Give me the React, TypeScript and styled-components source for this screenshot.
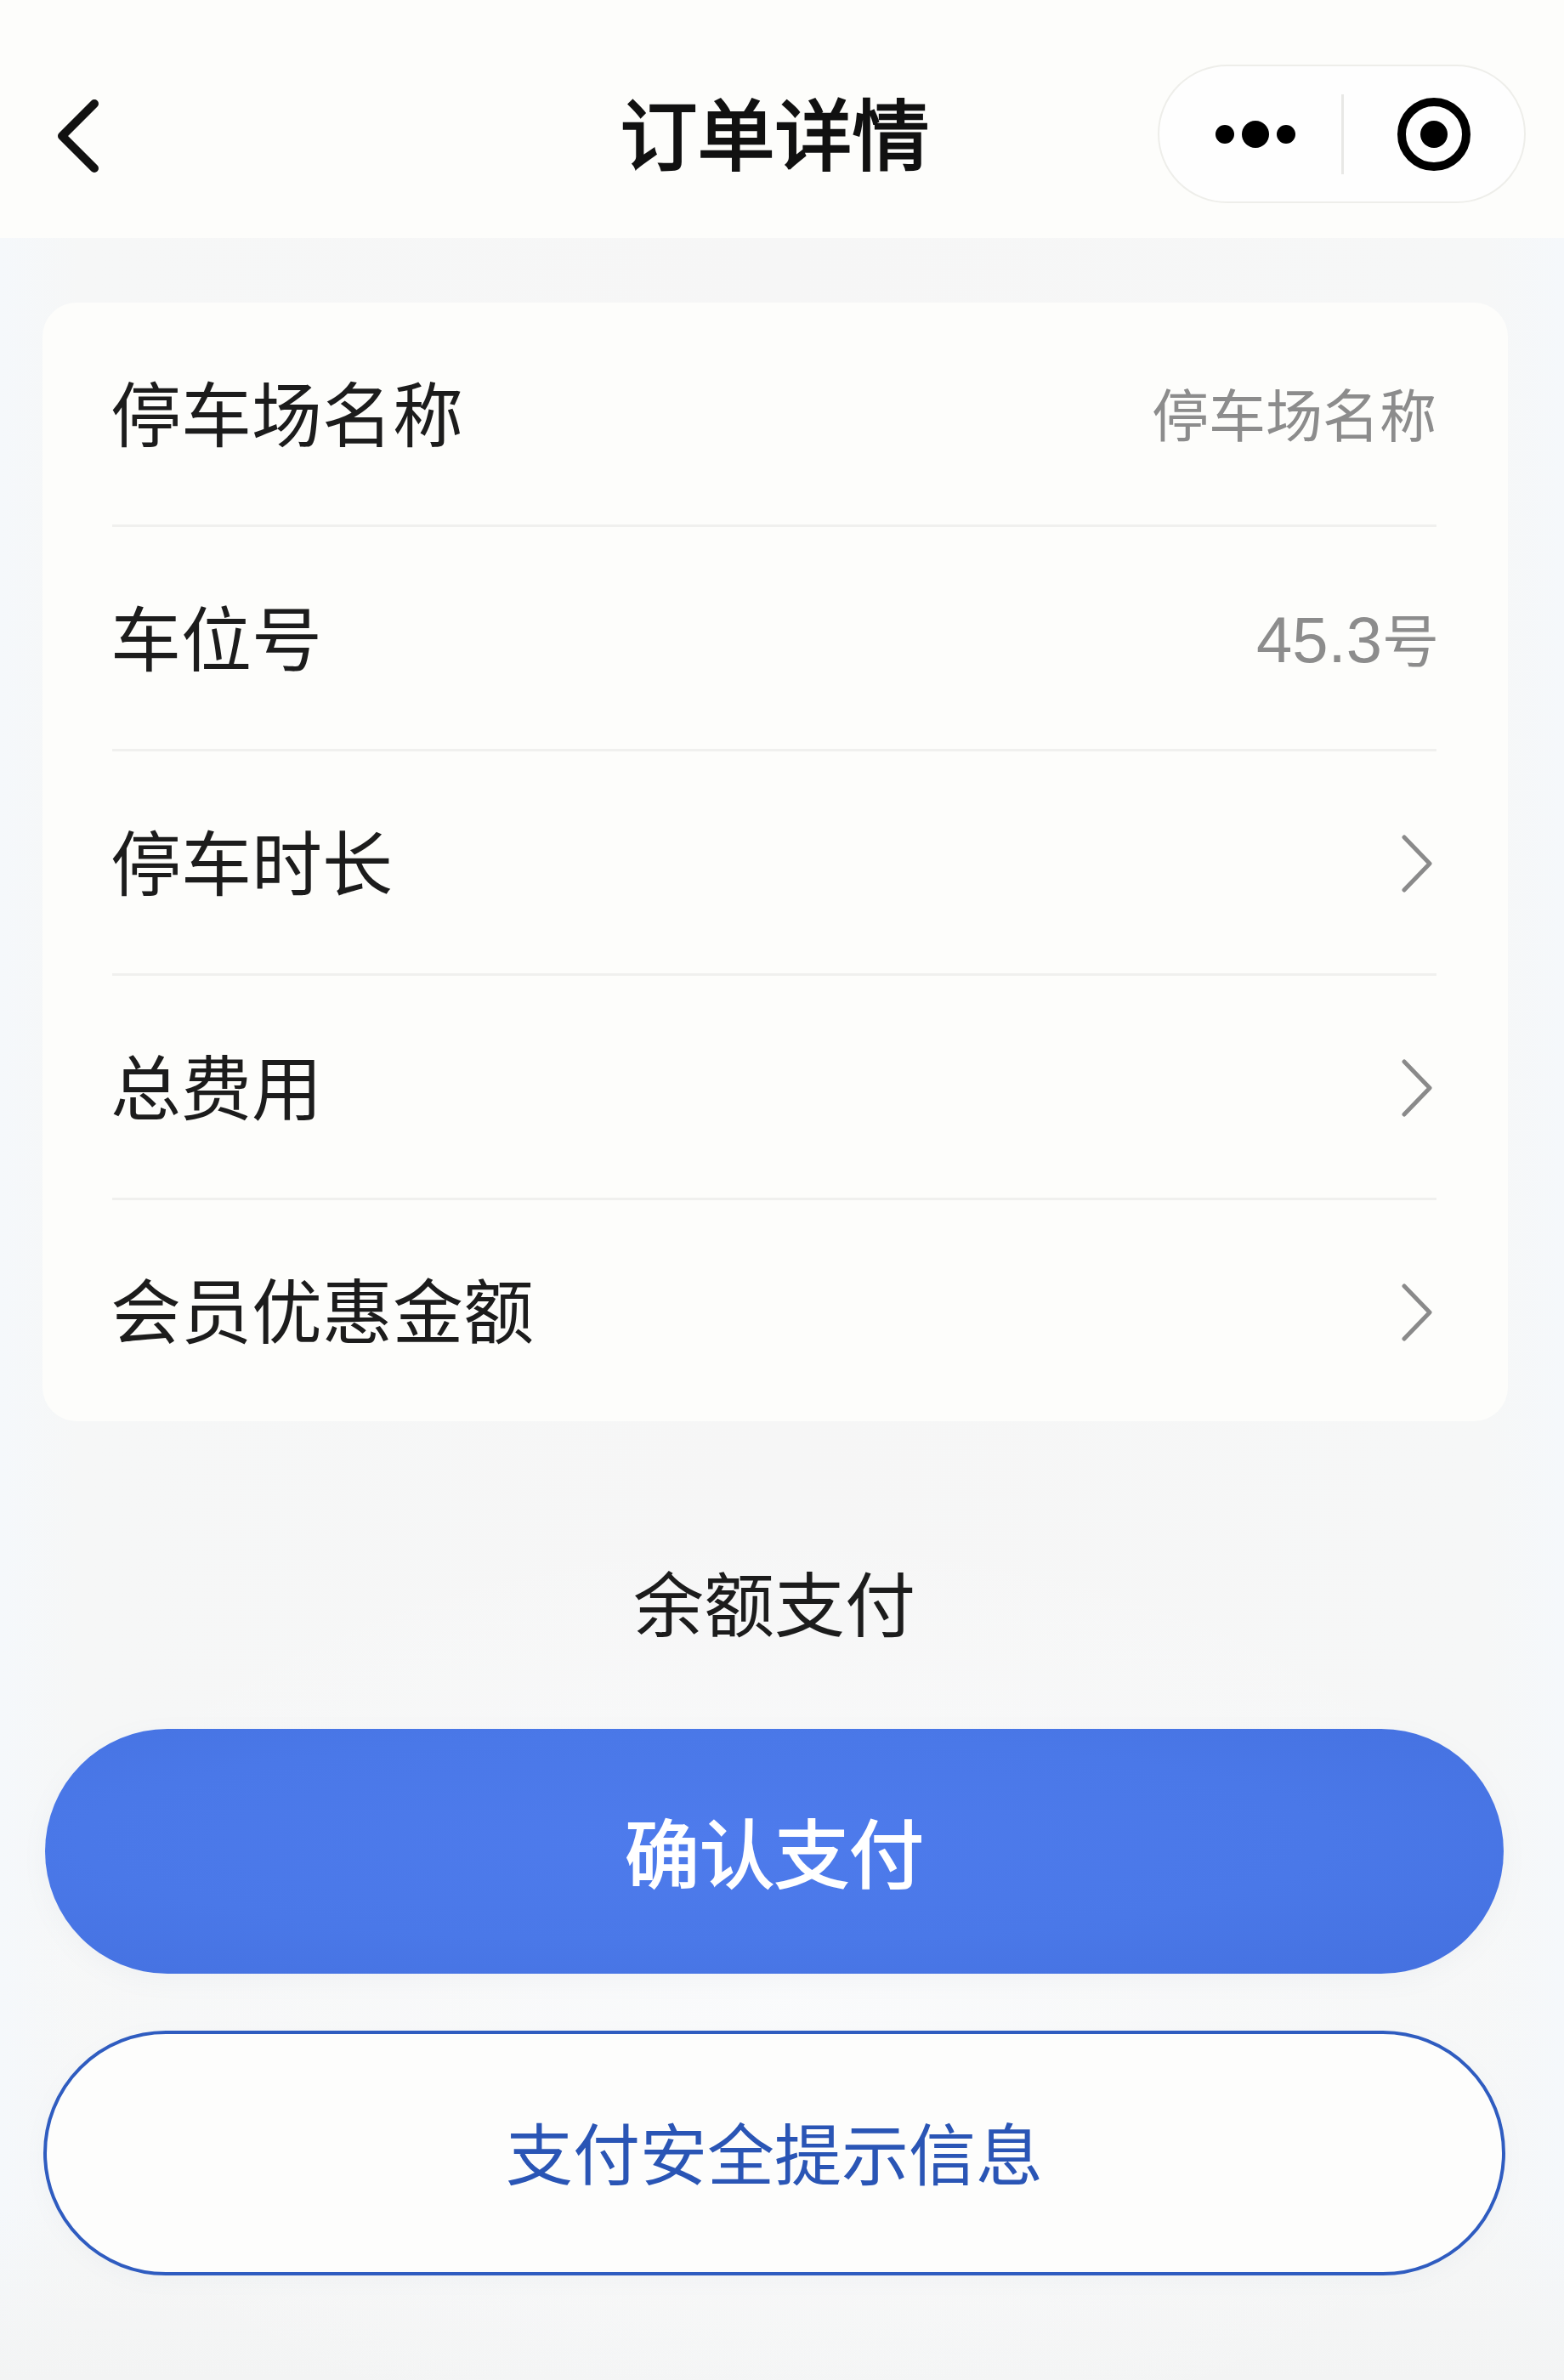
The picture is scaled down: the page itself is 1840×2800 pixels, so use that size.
import React from "react";
import styled, { createGlobalStyle } from "styled-components";

const GlobalStyle = createGlobalStyle`
  html, body {
    margin: 0;
    padding: 0;
  }
  body {
    font-family: "Liberation Sans", "Noto Sans CJK SC", sans-serif;
  }
`;

const Page = styled.div`
  width: 1840px;
  height: 2800px;
  overflow: hidden;
  background:
    radial-gradient(ellipse 950px 560px at 50% 2350px, rgba(250, 251, 252, 0.95) 0, rgba(250, 251, 252, 0) 100%),
    linear-gradient(180deg, rgba(244, 245, 245, 0) 2600px, #f3f4f4 2800px),
    linear-gradient(90deg, #f5f8fb 0, #f6f7f7 5%, #f6f6f6 50%, #f6f7f7 95%, #f5f8fb 100%);
`;

const Header = styled.header`
  box-sizing: border-box;
  height: 280px;
  padding: 40px 45px 0 28px;
  display: grid;
  grid-template-columns: 1fr auto 1fr;
  align-items: center;
  background: #fdfdfb;
`;

const BackButton = styled.div`
  margin-left: 38px;
  width: 52px;
  height: 90px;
  display: flex;
  align-items: center;
`;

const Title = styled.h1`
  margin: 0;
  position: relative;
  top: 2px;
  font-size: 91px;
  line-height: 120px;
  font-weight: 400;
  -webkit-text-stroke: 2.5px #111;
  color: #111;
`;

const Capsule = styled.div`
  justify-self: end;
  box-sizing: border-box;
  width: 433px;
  height: 163px;
  margin-bottom: 5px;
  border: 2px solid #eeeeea;
  border-radius: 82px;
  background: #fefefe;
  display: flex;
  align-items: center;
`;

const CapsuleSlot = styled.div<{ $width: number }>`
  width: ${(p) => p.$width}px;
  display: flex;
  justify-content: center;
  align-items: center;
`;

const MoreDots = styled.svg`
  margin-left: 14px;
`;

const CapsuleLine = styled.div`
  width: 3px;
  height: 94px;
  background: #e8e8e6;
`;

const Main = styled.main`
  padding: 76px 66px 0 50px;
`;

const Card = styled.section`
  background: #fdfdfb;
  border-radius: 40px;
  padding: 0 84px 0 82px;
`;

const Row = styled.div`
  box-sizing: border-box;
  height: 264px;
  display: flex;
  align-items: center;
  justify-content: space-between;
  border-bottom: 3px solid #f0f0ee;

  &:last-child {
    height: 260px;
    border-bottom: none;
  }
`;

const Label = styled.span`
  margin: 8px 0 0 -2px;
  font-size: 83px;
  line-height: 110px;
  color: #1c1c1c;
`;

const Value = styled.span<{ $tight?: boolean }>`
  margin-top: 8px;
  margin-right: ${(p) => (p.$tight ? -3 : 0)}px;
  font-size: 67px;
  line-height: 90px;
  color: #8c8c8c;
`;

const Digits = styled.span`
  font-size: 76px;
`;

const Chevron = styled.svg`
  display: block;
  margin: 3px 5px 0 0;
`;

const Footer = styled.div`
  padding: 0 71px 0 53px;
  display: flex;
  flex-direction: column;
`;

const BalanceText = styled.div`
  height: 362px;
  padding-top: 60px;
  box-sizing: border-box;
  display: flex;
  justify-content: center;
  align-items: center;
  font-size: 83px;
  color: #1c1c1c;
`;

const PrimaryButton = styled.button`
  height: 288px;
  border: none;
  border-radius: 144px;
  padding: 0 0 6px;
  background: radial-gradient(ellipse at 45% 45%, #4e7bec 0, #4a78e8 55%, #4470df 100%);
  box-shadow: 0 8px 30px rgba(120, 140, 170, 0.06);
  font-family: inherit;
  font-size: 88px;
  font-weight: 400;
  -webkit-text-stroke: 2px #fff;
  color: #fff;
`;

const SecondaryButton = styled.button`
  box-sizing: border-box;
  height: 288px;
  margin: 67px -2px 0;
  border: 4px solid #2f5cc0;
  border-radius: 144px;
  padding: 0 0 6px;
  background: #fdfdfc;
  box-shadow: 0 6px 24px rgba(120, 140, 170, 0.05);
  font-family: inherit;
  font-size: 79px;
  color: #2a55b5;
`;

type RowData = { label: string; value?: React.ReactNode; tight?: boolean };

const rows: RowData[] = [
  { label: "停车场名称", value: "停车场名称" },
  { label: "车位号", value: <><Digits>45.3</Digits>号</>, tight: true },
  { label: "停车时长" },
  { label: "总费用" },
  { label: "会员优惠金额" },
];

const App: React.FC = () => {
  return (
    <Page>
      <GlobalStyle />
      <Header>
        <BackButton>
          <svg width="52" height="90" viewBox="0 0 52 90" fill="none">
            <path d="M45 7 L7 45 L45 83" stroke="#111" strokeWidth="10" strokeLinecap="round" strokeLinejoin="round" />
          </svg>
        </BackButton>
        <Title>订单详情</Title>
        <Capsule>
          <CapsuleSlot $width={214}>
            <MoreDots width="100" height="34" viewBox="0 0 100 34" fill="#000">
              <circle cx="13" cy="17" r="11" />
              <circle cx="49" cy="17" r="16" />
              <circle cx="85" cy="17" r="11" />
            </MoreDots>
          </CapsuleSlot>
          <CapsuleLine />
          <CapsuleSlot $width={212}>
            <svg width="88" height="88" viewBox="0 0 88 88">
              <circle cx="44" cy="44" r="38" fill="none" stroke="#000" strokeWidth="10" />
              <circle cx="44" cy="44" r="16" fill="#000" />
            </svg>
          </CapsuleSlot>
        </Capsule>
      </Header>
      <Main>
        <Card>
          {rows.map((row) => (
            <Row key={row.label}>
              <Label>{row.label}</Label>
              {row.value ? (
                <Value $tight={row.tight}>{row.value}</Value>
              ) : (
                <Chevron width="36" height="68" viewBox="0 0 36 68" fill="none">
                  <path d="M3 3 L33 34 L3 65" stroke="#8a8a8a" strokeWidth="5" strokeLinecap="round" strokeLinejoin="round" />
                </Chevron>
              )}
            </Row>
          ))}
        </Card>
      </Main>
      <Footer>
        <BalanceText>余额支付</BalanceText>
        <PrimaryButton>确认支付</PrimaryButton>
        <SecondaryButton>支付安全提示信息</SecondaryButton>
      </Footer>
    </Page>
  );
};

export default App;
